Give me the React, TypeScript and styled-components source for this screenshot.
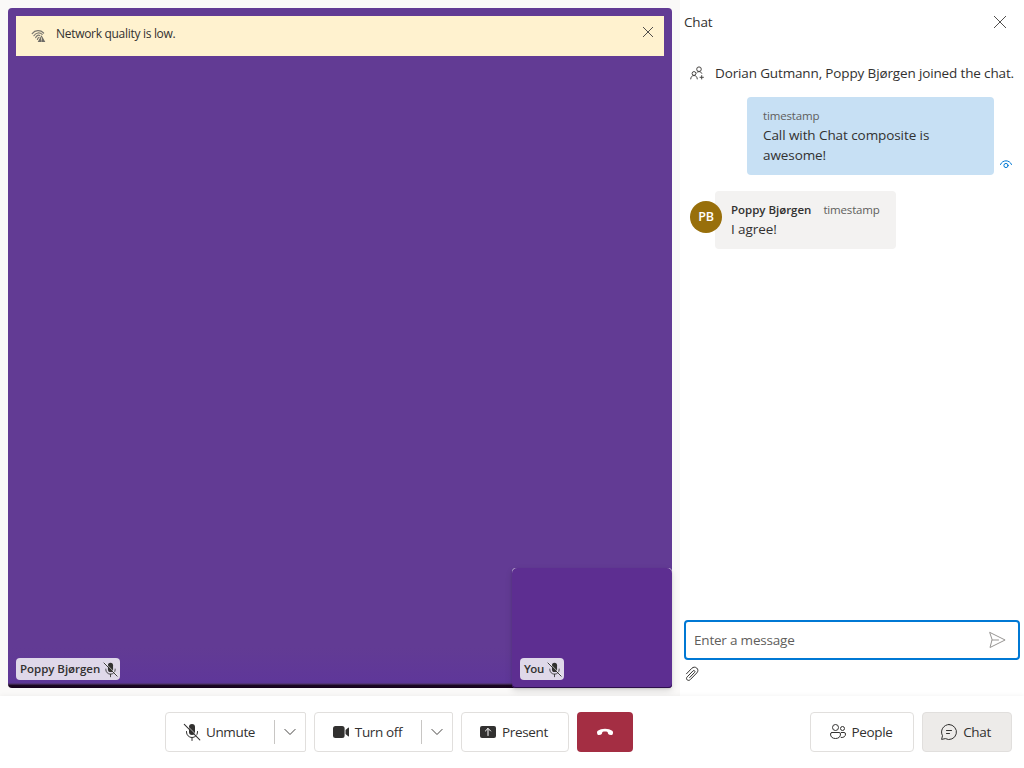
import React from 'react';
import styled, { createGlobalStyle } from 'styled-components';

const GlobalStyle = createGlobalStyle`
  * { box-sizing: border-box; }
  body { margin: 0; background: #faf9f8; }
  button { font: inherit; color: inherit; letter-spacing: inherit; padding: 0; cursor: pointer; }
  svg { display: block; flex: none; overflow: visible; }
`;

const Composite = styled.div`
  width: 1024px;
  height: 768px;
  display: flex;
  flex-direction: column;
  overflow: hidden;
  background: #faf9f8;
  color: #323130;
  font-family: 'Open Sans', 'Noto Sans', sans-serif;
  font-size: 13.5px;
  letter-spacing: -0.2px;
`;

const Main = styled.div`
  height: 696px;
  display: flex;
`;

const CallArea = styled.div`
  width: 680px;
  padding: 8px;
`;

const Stage = styled.div`
  position: relative;
  height: 680px;
  padding: 8px;
  border-radius: 4px;
  background: linear-gradient(#623b94 0, #623b94 640px, #5f3799 672px, #5c3696 675px, #4a3061 676px, #1b0722 677.5px, #14001c 680px);
`;

const Banner = styled.div`
  height: 40px;
  display: flex;
  align-items: flex-start;
  background: #fff2cf;
`;

const BannerIcon = styled.div`
  padding: 12px 10px 0 14px;
`;

const BannerText = styled.div`
  flex: 1;
  padding-top: 10px;
  font-size: 12px;
  line-height: 16px;
  letter-spacing: -0.3px;
`;

const BannerClose = styled.button`
  border: 0;
  background: none;
  margin: 11px 11px 0 0;
`;

const LocalTile = styled.div`
  position: absolute;
  right: 0;
  bottom: 0;
  width: 160px;
  height: 120px;
  border-radius: 4px;
  background: linear-gradient(#d8cfe2 0, #d8cfe2 6px, #5d2e91 6px);
  box-shadow: 0 3px 7px rgba(0, 0, 0, 0.13), 0 1px 2px rgba(0, 0, 0, 0.11);
`;

const LocalVideo = styled.div`
  height: 120px;
  border-radius: 5px 5px 4px 4px;
  background: #5d2e91;
  box-shadow: inset 0 -1px 0 #2d0f4c;
`;

const NameTag = styled.div<{ $spacing: number }>`
  position: absolute;
  left: 8px;
  bottom: 8px;
  height: 22px;
  display: flex;
  align-items: center;
  gap: 2px;
  padding: 0 1px 0 4px;
  border-radius: 4px;
  background: #dfd8e9;
  font-size: 11.5px;
  font-weight: 600;
  letter-spacing: ${(p) => p.$spacing}px;
  line-height: 16px;
`;

const ChatPane = styled.div`
  width: 344px;
  display: flex;
  flex-direction: column;
  background: #fff;
`;

const PaneHeader = styled.div`
  height: 44px;
  display: flex;
  align-items: center;
  justify-content: space-between;
  padding: 0 18px 0 4px;
`;

const IconButton = styled.button`
  border: 0;
  background: none;
`;

const Thread = styled.div`
  flex: 1;
  padding: 19px 0 0 10px;
`;

const SystemMessage = styled.div`
  height: 20px;
  display: flex;
  align-items: center;
  gap: 10px;
  line-height: 20px;
  letter-spacing: -0.14px;
  white-space: nowrap;
`;

const SentRow = styled.div`
  display: flex;
  align-items: flex-end;
  gap: 6px;
  margin: 14px 0 16px 57px;
`;

const Bubble = styled.div<{ $own?: boolean }>`
  width: ${(p) => (p.$own ? 247 : 181)}px;
  height: ${(p) => (p.$own ? 78 : 58)}px;
  padding: ${(p) => (p.$own ? '11px 40px 0 16px' : '11px 0 0 16px')};
  border-radius: 4px;
  background: ${(p) => (p.$own ? '#c7e0f4' : '#f3f2f1')};
`;

const Meta = styled.div`
  display: flex;
  gap: 12px;
  font-size: 11.5px;
  line-height: 16px;
  letter-spacing: -0.16px;
`;

const Author = styled.span`
  font-weight: 600;
  letter-spacing: -0.02px;
`;

const Time = styled.span`
  color: #605e5c;
`;

const Body = styled.div`
  line-height: 20px;
  margin-top: 1px;
  letter-spacing: -0.08px;
`;

const Seen = styled.div`
  padding-bottom: 6px;
`;

const ReceivedRow = styled.div`
  display: flex;
`;

const Avatar = styled.div`
  z-index: 1;
  width: 32px;
  height: 32px;
  margin: 10px -7px 0 0;
  border-radius: 50%;
  background: #986f0b;
  color: #fff;
  font-size: 12.5px;
  font-weight: 600;
  line-height: 32px;
  text-align: center;
`;

const Composer = styled.div`
  height: 76px;
  padding: 0 4px;
`;

const MessageBox = styled.div`
  height: 40px;
  display: flex;
  align-items: center;
  justify-content: space-between;
  padding: 0 11px 0 8px;
  border: 2px solid #0078d4;
  border-radius: 4px;
  color: #605e5c;
`;

const Attach = styled.button`
  border: 0;
  background: none;
  margin: 6px 0 0 0;
`;

const ControlBar = styled.div`
  z-index: 1;
  height: 72px;
  display: flex;
  gap: 8px;
  padding: 16px 12px 16px 165px;
  background: #fff;
  box-shadow: 0 0 5px rgba(0, 0, 0, 0.06);
  letter-spacing: -0.36px;
`;

const SideActions = styled.div`
  margin-left: auto;
  display: flex;
  gap: 8px;
`;

const ControlButton = styled.button<{ $width: number; $pressed?: boolean; $danger?: boolean }>`
  width: ${(p) => p.$width}px;
  height: 40px;
  display: flex;
  align-items: center;
  justify-content: center;
  gap: 4px;
  padding-right: ${(p) => (p.$danger ? 0 : 4)}px;
  border: ${(p) => (p.$danger ? '0' : '1px solid #e1dfdd')};
  border-radius: 4px;
  background: ${(p) => (p.$danger ? '#a42e43' : p.$pressed ? '#edebe9' : '#fff')};
`;

const SplitButton = styled.div<{ $width: number }>`
  width: ${(p) => p.$width}px;
  height: 40px;
  display: flex;
  align-items: center;
  border: 1px solid #e1dfdd;
  border-radius: 4px 2px 2px 4px;
`;

const SplitMain = styled.button`
  flex: 1;
  height: 38px;
  display: flex;
  align-items: center;
  justify-content: center;
  gap: 4px;
  padding-right: 3px;
  border: 0;
  background: none;
`;

const SplitMenu = styled.button`
  width: 31px;
  height: 24px;
  display: flex;
  align-items: center;
  justify-content: center;
  border: 0;
  border-left: 1px solid #c8c6c4;
  background: none;
`;

const MicOff = ({ size }: { size: number }) => (
  <svg width={size} height={size} viewBox="0 0 20 20" fill="none" stroke="#323130">
    <path d="M7 5a3 3 0 0 1 6 0v5a3 3 0 0 1-6 0Z" fill="#323130" stroke="none" />
    <path d="M4.5 9.5V10a5.5 5.5 0 0 0 11 0v-.5M10 15.5v3" strokeLinecap="round" />
    <path d="M3.1 1.7 18.6 17.2" stroke="#fff" strokeOpacity="0.7" />
    <path d="m2.3 2.3 15.5 15.5" strokeLinecap="round" strokeWidth="1.1" />
  </svg>
);

const Video = () => (
  <svg width="20" height="20" viewBox="0 0 20 20" fill="#323130">
    <rect x="2" y="4" width="11.6" height="12" rx="2.5" />
    <path d="m14.5 8 2.7-2.3c.4-.3.8-.1.8.4v7.8c0 .5-.4.7-.8.4L14.5 12Z" />
  </svg>
);

const Present = () => (
  <svg width="20" height="20" viewBox="0 0 20 20" fill="none">
    <rect x="2" y="4" width="16" height="12" rx="2" fill="#323130" />
    <path d="M10 13.5v-7M7.4 9 10 6.4 12.6 9" stroke="#fff" strokeLinecap="round" strokeLinejoin="round" />
  </svg>
);

const HangUp = () => (
  <svg width="20" height="20" viewBox="0 0 20 20" fill="#fff">
    <path d="M18 11.1l-.2.9c-.2.8-1 1.2-1.8 1.1l-1.6-.3c-.7-.1-1.2-.6-1.4-1.3l-.4-1.5c-.8-.3-1.7-.4-2.6-.4s-1.8.1-2.6.4L7 11.5c-.2.7-.7 1.2-1.4 1.3L4 13.1c-.8.1-1.5-.3-1.7-1.1L2.1 11.1c-.2-.9 0-1.7.7-2.3C4.7 7.4 7.1 6.7 10 6.7s5.4.7 7.2 2.1c.7.6 1 1.4.8 2.3Z" />
  </svg>
);

const People = () => (
  <svg width="20" height="20" viewBox="0 0 20 20" fill="none" stroke="#323130">
    <circle cx="7.5" cy="5.5" r="3" />
    <circle cx="14.5" cy="6.5" r="2" />
    <path d="M4 10.5h7A1.5 1.5 0 0 1 12.5 12c0 3-2 4.5-5 4.5s-5-1.5-5-4.5A1.5 1.5 0 0 1 4 10.5ZM13.2 10.5H16a1.5 1.5 0 0 1 1.5 1.5c0 2.4-1.6 3.7-4.3 3.5" strokeLinecap="round" />
  </svg>
);

const ChatBubble = () => (
  <svg width="20" height="20" viewBox="0 0 20 20" fill="none" stroke="#323130" strokeLinecap="round" strokeLinejoin="round">
    <path d="M10 2.5a7.5 7.5 0 1 1-3.6 14.1L2.6 17.4l.9-3.7A7.5 7.5 0 0 1 10 2.5ZM7.5 8.5h5M7.5 11.5h3" />
  </svg>
);

const Chevron = () => (
  <svg width="12" height="8" viewBox="0 0 12 8" fill="none" stroke="#484644">
    <path d="m.6 1.1 5.4 5.4 5.4-5.4" />
  </svg>
);

const Cross = ({ size }: { size: number }) => (
  <svg width={size} height={size} viewBox={`0 0 ${size} ${size}`} fill="none" stroke="#484644" strokeWidth=".95">
    <path d={`M0 0 ${size} ${size}M${size} 0 0 ${size}`} />
  </svg>
);

const WeakNetwork = () => (
  <svg width="16" height="16" viewBox="0 0 16 16" fill="none" stroke="#7a776f" strokeWidth="1.2" strokeLinecap="round">
    <path d="M2.2 5.6C5.2 1.9 10.4 1.8 13.6 5M3.9 7.7C6 4.4 9.8 4.2 12.2 6.4M5.7 9.6C6.8 7.2 8.5 6.8 9.8 7.5M7.4 11.5c.3-1.3.9-2 1.6-2.2" />
    <path d="m11.5 7.2 3.8 6.800H7.700Z" fill="#6e6b66" strokeLinejoin="round" stroke="none" />
    <path d="M11.500 9.800v1.800M11.500 12.900v.1" stroke="#fff2cf" strokeWidth=".7" />
  </svg>
);

const PeopleAdd = () => (
  <svg width="15" height="14" viewBox="0 0 15 14" fill="none" stroke="#484644">
    <circle cx="9" cy="3.200" r="2.300" />
    <circle cx="4" cy="7.500" r="1.900" />
    <path d="M.7 13.300c.1-2.300 1.300-3.800 3.300-3.800s3.200 1.500 3.300 3.800M6.500 7c.6-.9 1.400-1.400 2.500-1.400 1.400 0 2.400.8 2.900 2.100M11.700 9.200v4.200M9.600 11.300h4.200" />
  </svg>
);

const Eye = () => (
  <svg width="12" height="9" viewBox="0 0 12 9" fill="none" stroke="#0078d4" strokeLinecap="round">
    <path d="M.5 4.500C2.300-.5 9.700-.5 11.500 4.500" />
    <circle cx="6" cy="5.500" r="2.100" />
  </svg>
);

const Send = () => (
  <svg width="18" height="18" viewBox="0 0 18 18" fill="none" stroke="#979593" strokeLinejoin="round" strokeLinecap="round">
    <path d="M1 1.500 16.100 9 1 16.500 3 9ZM3 9H9.500" />
  </svg>
);

const Clip = () => (
  <svg width="16" height="16" viewBox="0 0 16 16" fill="none" stroke="#323130" strokeLinecap="round">
    <path d="m2.500 7.800 5.300-5.500c1.500-1.400 3.500-1.500 4.900-.3 1.600 1.400 1.500 3.400.1 4.900l-6.500 6.700c-.9 1-2.200 1-3.100.3-1-.9-.9-2.100 0-3l5.800-6c.5-.5 1.100-.5 1.600-.1.500.5.5 1.100 0 1.600L5.700 11.500" />
  </svg>
);

export default function App() {
  return (
    <>
      <GlobalStyle />
      <Composite>
        <Main>
          <CallArea>
            <Stage>
              <Banner>
                <BannerIcon><WeakNetwork /></BannerIcon>
                <BannerText>Network quality is low.</BannerText>
                <BannerClose aria-label="Dismiss"><Cross size={10} /></BannerClose>
              </Banner>
              <NameTag $spacing={-0.03}>Poppy Bjørgen<MicOff size={17} /></NameTag>
              <LocalTile>
                <LocalVideo />
                <NameTag $spacing={-0.45}>You<MicOff size={17} /></NameTag>
              </LocalTile>
            </Stage>
          </CallArea>
          <ChatPane>
            <PaneHeader>
              <span>Chat</span>
              <IconButton aria-label="Close chat"><Cross size={12} /></IconButton>
            </PaneHeader>
            <Thread>
              <SystemMessage>
                <PeopleAdd />
                <span>Dorian Gutmann, Poppy Bjørgen joined the chat.</span>
              </SystemMessage>
              <SentRow>
                <Bubble $own>
                  <Meta><Time>timestamp</Time></Meta>
                  <Body>Call with Chat composite is awesome!</Body>
                </Bubble>
                <Seen><Eye /></Seen>
              </SentRow>
              <ReceivedRow>
                <Avatar>PB</Avatar>
                <Bubble>
                  <Meta><Author>Poppy Bjørgen</Author><Time>timestamp</Time></Meta>
                  <Body>I agree!</Body>
                </Bubble>
              </ReceivedRow>
            </Thread>
            <Composer>
              <MessageBox>
                <span>Enter a message</span>
                <Send />
              </MessageBox>
              <Attach aria-label="Attach file"><Clip /></Attach>
            </Composer>
          </ChatPane>
        </Main>
        <ControlBar>
          <SplitButton $width={141}>
            <SplitMain><MicOff size={20} />Unmute</SplitMain>
            <SplitMenu aria-label="Microphone options"><Chevron /></SplitMenu>
          </SplitButton>
          <SplitButton $width={139}>
            <SplitMain><Video />Turn off</SplitMain>
            <SplitMenu aria-label="Camera options"><Chevron /></SplitMenu>
          </SplitButton>
          <ControlButton $width={108}><Present />Present</ControlButton>
          <ControlButton $width={56} $danger aria-label="Leave"><HangUp /></ControlButton>
          <SideActions>
            <ControlButton $width={104}><People />People</ControlButton>
            <ControlButton $width={90} $pressed><ChatBubble />Chat</ControlButton>
          </SideActions>
        </ControlBar>
      </Composite>
    </>
  );
}
